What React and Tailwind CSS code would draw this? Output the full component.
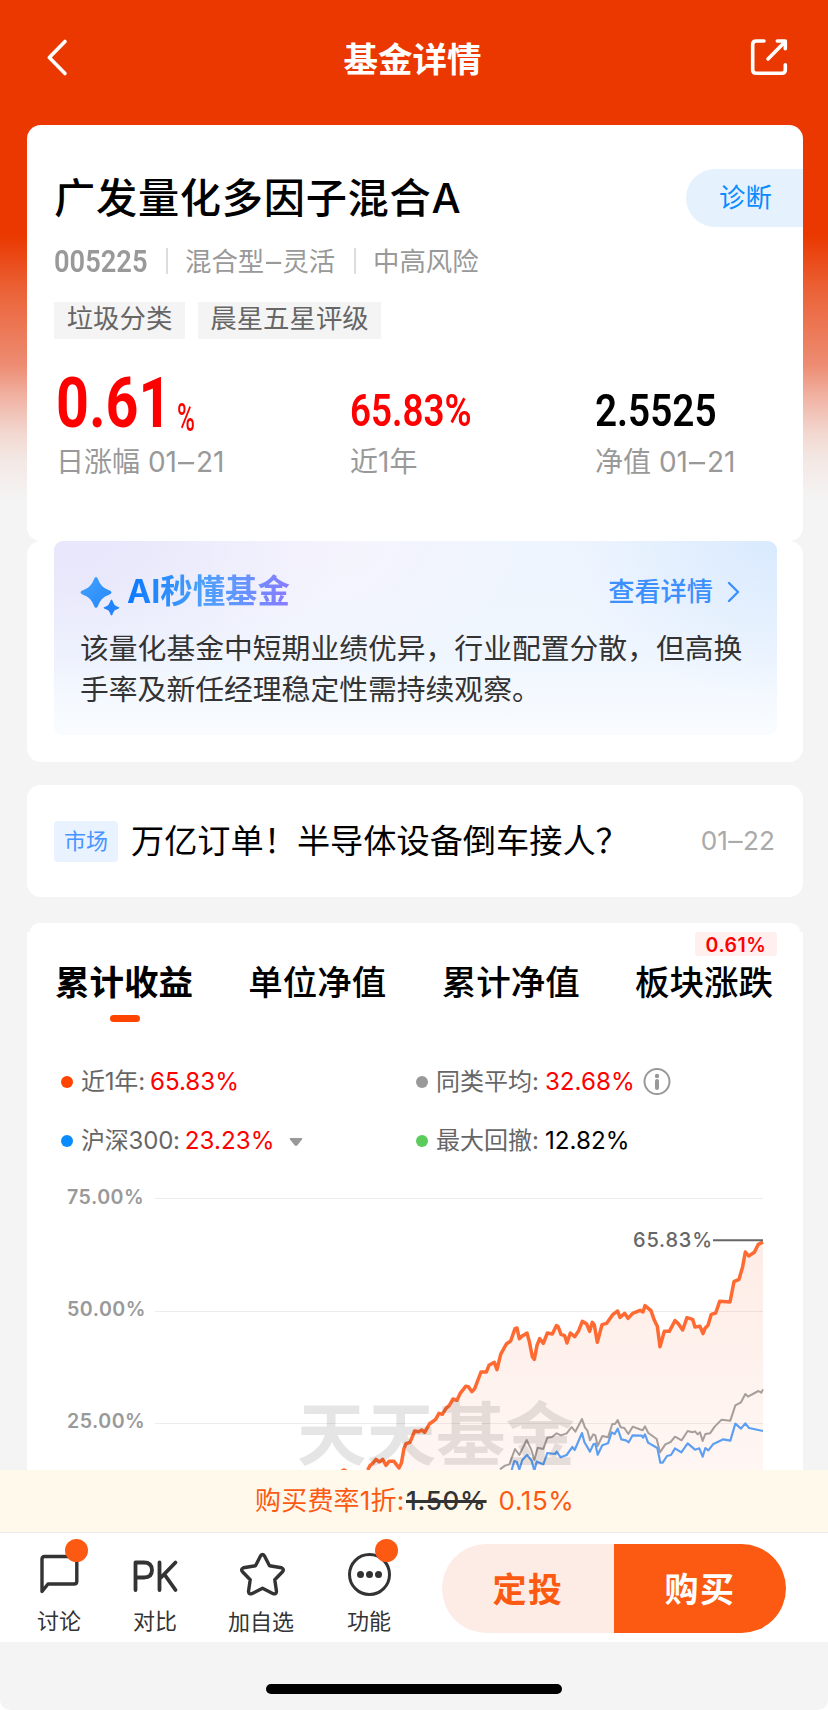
import React from "react";

const SANS = "font-[Inter,'Noto_Sans_CJK_SC',sans-serif]";
const DIN = "font-[Roboto,'Noto_Sans_CJK_SC',sans-serif]";

const fundLine = [
  [293, 810], [300, 797], [308, 790], [318, 778], [328, 786], [338, 778], [348, 796], [357, 784], [372, 784], [387, 804],
  [394, 790], [402, 745], [408, 731], [420, 727], [434, 693], [446, 695], [455, 690], [464, 697], [478, 672], [497, 658],
  [507, 640], [517, 643], [528, 625], [538, 616], [549, 597], [561, 601], [570, 581], [587, 559], [595, 560], [606, 575],
  [614, 566], [633, 516], [649, 516], [657, 496], [673, 487], [681, 509], [692, 463], [709, 432], [722, 423], [735, 386],
  [741, 384], [748, 416], [758, 407], [771, 399], [778, 425], [787, 470], [793, 478], [801, 436], [809, 416], [820, 430],
  [832, 399], [847, 402], [859, 377], [864, 379], [873, 403], [884, 407], [891, 429], [901, 399], [914, 410], [926, 392],
  [937, 364], [950, 372], [959, 394], [967, 367], [973, 375], [982, 427], [996, 374], [1010, 370], [1028, 344], [1043, 333],
  [1050, 352], [1064, 340], [1074, 355], [1088, 340], [1110, 331], [1119, 336], [1125, 317], [1143, 332], [1153, 361],
  [1162, 379], [1170, 440], [1183, 394], [1198, 394], [1215, 362], [1225, 371], [1238, 390], [1251, 353], [1268, 358],
  [1275, 381], [1290, 379], [1299, 401], [1305, 385], [1314, 376], [1324, 343], [1337, 339], [1349, 304], [1380, 306],
  [1392, 245], [1407, 238], [1418, 200], [1426, 156], [1436, 168], [1453, 157], [1465, 133], [1479, 126],
];

const peerLine = [
  [690, 808], [705, 797], [718, 793], [735, 747], [748, 765], [770, 720], [785, 752], [793, 780], [803, 743], [820, 747],
  [832, 713], [846, 711], [860, 700], [873, 706], [890, 700], [905, 681], [916, 695], [936, 657], [945, 683], [952, 691],
  [960, 721], [970, 703], [976, 706], [983, 738], [997, 708], [1014, 712], [1027, 672], [1035, 672], [1043, 660],
  [1052, 682], [1063, 684], [1075, 702], [1088, 680], [1107, 687], [1118, 691], [1125, 679], [1135, 699], [1160, 717],
  [1170, 757], [1186, 733], [1202, 726], [1215, 710], [1235, 721], [1253, 693], [1267, 697], [1275, 694], [1283, 703],
  [1290, 697], [1298, 723], [1306, 702], [1320, 700], [1334, 680], [1355, 659], [1381, 662], [1396, 616], [1413, 607],
  [1426, 582], [1434, 590], [1465, 573], [1474, 578], [1479, 568],
];

const indexLine = [
  [725, 810], [733, 783], [740, 785], [748, 808], [757, 780], [771, 765], [785, 782], [793, 812], [800, 785], [820, 793],
  [832, 759], [855, 762], [860, 755], [872, 772], [890, 765], [907, 741], [914, 750], [936, 699], [943, 726], [960, 755],
  [970, 733], [976, 731], [983, 764], [997, 736], [1014, 730], [1025, 697], [1034, 702], [1043, 686], [1054, 718],
  [1068, 721], [1076, 727], [1088, 706], [1115, 707], [1119, 713], [1125, 703], [1134, 728], [1162, 744], [1171, 788],
  [1178, 788], [1191, 768], [1203, 765], [1215, 745], [1234, 757], [1253, 730], [1275, 749], [1288, 745], [1298, 770],
  [1306, 744], [1315, 751], [1329, 733], [1360, 718], [1381, 722], [1396, 671], [1413, 686], [1426, 670], [1437, 684],
  [1479, 693],
];

const toPoints = (pts) => pts.map((p) => p.join(",")).join(" ");

function Header() {
  return (
    <header className="flex h-[125px] items-start justify-between pl-[45px] pr-[39px] pt-[38px]">
      <svg className="h-[40px] w-[24px]" viewBox="0 0 24 40" fill="none" stroke="#fff" strokeWidth="3.6" strokeLinecap="round" strokeLinejoin="round">
        <path d="M20 3.5L4.3 19.500L20 35.5" />
      </svg>
      <h1 className="ml-[7px] mt-[1px] text-[34.5px] font-bold leading-[42px] text-white">基金详情</h1>
      <svg className="h-[40px] w-[40px]" viewBox="0 0 40 40" fill="none" stroke="#fff" strokeWidth="3.6" strokeLinecap="round" strokeLinejoin="round">
        <path d="M15 3H7.200Q3.700 3 3.700 6.500V31.800Q3.700 35.300 7.200 35.300H32.800Q36.300 35.300 36.300 31.800V26.700" />
        <path d="M28.300 3H36.300V10.700M35.300 4.500L19 21" />
      </svg>
    </header>
  );
}

function Dash() {
  return <span className="mx-[2.500px] inline-block scale-x-[1.150]">–</span>;
}

function Metric({ value, label, className }) {
  return (
    <div className="flex flex-col">
      <div className={`flex h-[62px] items-center whitespace-nowrap pt-[20px] ${DIN} text-[44px] font-semibold leading-none ${className}`}>{value}</div>
      <MetricLabel>{label}</MetricLabel>
    </div>
  );
}

function MetricLabel({ children }) {
  return <div className="mt-[16px] whitespace-nowrap text-[28px] leading-[28px] text-[#999]">{children}</div>;
}

function FundCard() {
  return (
    <section className="h-[416px] rounded-[14px] bg-white pt-[44px]">
      <div className="flex h-[58px] items-center justify-between pl-[27px]">
        <h2 className="whitespace-nowrap text-[41.2px] font-medium leading-[60px] tracking-[.75px] text-black">广发量化多因子混合A</h2>
        <button className="flex h-[58px] w-[117px] items-center rounded-l-full bg-[#e5f2fe] pb-[2px] pl-[33px] text-[26.400px] leading-none text-[#0a8cff]">诊断</button>
      </div>
      <div className="mt-[20px] flex h-[28px] items-center whitespace-nowrap pl-[27px] text-[26.400px] leading-[28px] text-[#999]">
        <span className={`w-[112px] pt-[2px] ${DIN}`}>
          <span className="inline-block origin-left scale-x-[.88] text-[31px] font-semibold leading-[28px]">005225</span>
        </span>
        <span className="h-[26px] w-[2px] bg-[#ddd]" />
        <span className="ml-[17px] w-[169px]">混合型<Dash />灵活</span>
        <span className="h-[26px] w-[2px] bg-[#ddd]" />
        <span className="ml-[17px]">中高风险</span>
      </div>
      <div className="mt-[27px] flex h-[37px] gap-[13px] whitespace-nowrap pl-[27px] text-[26.4px] leading-[33px] text-[#666]">
        <span className="w-[131px] bg-[#f4f4f4] text-center">垃圾分类</span>
        <span className="w-[183px] bg-[#f4f4f4] text-center">晨星五星评级</span>
      </div>
      <div className="mt-[31px] grid grid-cols-[294px_245px_180px] pl-[29px]">
        <div>
          <div className={`flex h-[62px] items-center leading-none text-[#fe0000] ${DIN}`}>
            <span className="w-[121px] pt-[3px]">
              <span className="inline-block origin-left scale-x-[.82] text-[70px] font-bold leading-[62px]">0.61</span>
            </span>
            <span className="w-[24px] pt-[36px]">
              <span className="inline-block origin-left scale-x-[.64] text-[38px] font-medium leading-[28px]">%</span>
            </span>
          </div>
          <MetricLabel>日涨幅 01<Dash />21</MetricLabel>
        </div>
        <Metric
          className="text-[#fe0000]"
          value={<span className="origin-left scale-x-[.835]">65.83%</span>}
          label="近1年"
        />
        <Metric
          className="text-black"
          value={<span className="origin-left scale-x-[.88]">2.5525</span>}
          label={<>净值 01<Dash />21</>}
        />
      </div>
    </section>
  );
}

function AiCard() {
  return (
    <section className="h-[221px] rounded-[14px] bg-white px-[27px]">
      <div className="h-[194px] w-[723px] rounded-[9px] bg-[radial-gradient(ellipse_30%_80%_at_100%_0%,#d9eafe_0%,transparent_100%),radial-gradient(ellipse_40%_80%_at_0%_0%,#e9e7fb_20%,transparent_100%),radial-gradient(ellipse_30%_70%_at_36%_0%,#f6f4fd_0%,transparent_100%),linear-gradient(180deg,#eff5fe_0%,#f0f6fe_60%,#f9fcff_100%)] px-[26px] pt-[29px]">
        <div className="flex h-[44px] items-center">
          <svg className="h-[42px] w-[42px] overflow-visible" viewBox="0 0 42 42">
            <defs>
              <linearGradient id="spark" x1="0" y1="0" x2="1" y2="1">
                <stop offset="0" stopColor="#45a5fd" />
                <stop offset="1" stopColor="#2484fc" />
              </linearGradient>
            </defs>
            <path fill="url(#spark)" d="M16 6Q17.5 6 18.4 9Q21 16.500 28.500 19.100Q31.500 20 31.500 21.500Q31.500 23 28.500 23.900Q21 26.500 18.400 34Q17.500 37 16 37Q14.500 37 13.600 34Q11 26.500 3.500 23.900Q.5 23 .5 21.500Q.5 20 3.500 19.100Q11 16.500 13.600 9Q14.500 6 16 6Z" />
            <path fill="#2484fc" d="M31.500 28.500Q32.400 28.500 33 31Q34 34.500 37 35.400Q39.500 36 39.500 36.800Q39.500 37.600 37 38.200Q34 39 33 42Q32.400 44.500 31.500 44.500Q30.600 44.500 30 42Q29 39 26 38.200Q23.500 37.600 23.500 36.800Q23.500 36 26 35.400Q29 34.500 30 31Q30.600 28.500 31.500 28.500Z" />
          </svg>
          <h3 className="ml-[5px] bg-[linear-gradient(90deg,#0a78ff_0%,#4aa0fb_45%,#5f98ff_65%,#8a7bff_100%)] bg-clip-text text-[32.400px] font-bold leading-[44px] text-transparent">AI秒懂基金</h3>
          <span className="ml-auto text-[26.200px] font-medium leading-[44px] text-[#3d90fb]">查看详情</span>
          <svg className="ml-[13px] mr-[10px] h-[22px] w-[15px]" viewBox="0 0 15 22" fill="none" stroke="#3d90fb" strokeWidth="2.4" strokeLinecap="round" strokeLinejoin="round">
            <path d="M3 2L12 11L3 20" />
          </svg>
        </div>
        <p className="mt-[15px] whitespace-nowrap text-[28.800px] leading-[40.500px] text-[#333]">
          该量化基金中短期业绩优异，行业配置分散，但高换
          <br />
          手率及新任经理稳定性需持续观察。
        </p>
      </div>
    </section>
  );
}

function NewsCard() {
  return (
    <section className="mt-[23px] flex h-[112px] items-center rounded-[14px] bg-white pl-[27px] pr-[28px]">
      <span className="h-[41px] w-[64px] rounded-[4px] bg-[#e9f2ff] text-center text-[22px] leading-[40px] text-[#4895ff]">市场</span>
      <span className="ml-[13px] whitespace-nowrap text-[33.200px] leading-[44px] text-black">万亿订单！半导体设备倒车接人？</span>
      <span className="ml-auto text-[26.200px] leading-[40px] text-[#aaa]">01<span className="mx-[1px] inline-block scale-x-110">–</span>22</span>
    </section>
  );
}

function Tab({ children, active, badge }) {
  return (
    <div className="relative flex flex-col items-center">
      {badge && (
        <span className="absolute -top-[30px] right-[-4px] h-[24px] w-[82px] rounded-[4px] bg-[#ffefef] text-center text-[19.500px] font-semibold leading-[26px] tracking-[.5px] text-[#fe0000]">{badge}</span>
      )}
      <span className={`text-[34.500px] leading-[41px] text-black ${active ? "font-bold" : "font-medium"}`}>{children}</span>
      {active && <span className="mt-[12px] h-[7px] w-[30px] translate-x-px rounded-full bg-[#ff4400]" />}
    </div>
  );
}

function LegendItem({ dot, label, value, labelClass = "", valueClass, children }) {
  return (
    <div className="flex h-[30px] items-center whitespace-nowrap">
      <span className={`h-[12px] w-[12px] rounded-full ${dot}`} />
      <span className={`ml-[8px] text-[24px] leading-[30px] text-[#666] ${labelClass}`}>{label}</span>
      <span className={`text-[24.200px] leading-[30px] ${valueClass}`}>{value}</span>
      {children}
    </div>
  );
}

function AxisLabel({ children }) {
  return <div className="h-[112px] pl-[40px] text-[19.600px] font-semibold leading-[20px] tracking-[.5px] text-[#999]">{children}</div>;
}

function Chart() {
  return (
    <div className="relative mt-[31px] h-[283px]">
      <div>
        <AxisLabel>75.00%</AxisLabel>
        <AxisLabel>50.00%</AxisLabel>
        <div className="pl-[40px] text-[19.600px] font-semibold leading-[20px] tracking-[.5px] text-[#999]">25.00%</div>
      </div>
      <svg className="absolute left-[27px] top-[-7px] h-[290px] w-[723px]" viewBox="-648 -60 2169 870">
        <defs>
          <linearGradient id="area" x1="0" y1="0" x2="0" y2="1">
            <stop offset="0" stopColor="#f7531a" stopOpacity=".11" />
            <stop offset="1" stopColor="#f7531a" stopOpacity=".05" />
          </linearGradient>
        </defs>
        <g stroke="#000" strokeOpacity=".07" strokeWidth="3">
          <path d="M-345 -4.500H1479M-345 334.500H1479M-345 670.500H1479" />
        </g>
        <polygon fill="url(#area)" points={`${toPoints(fundLine)} 1479,810 293,810`} />
        <g fill="none" strokeLinejoin="round">
          <polyline points={toPoints(peerLine)} stroke="#a69e9b" strokeWidth="6" />
          <polyline points={toPoints(indexLine)} stroke="#5c9ff2" strokeWidth="6.500" />
          <polyline points={toPoints(fundLine)} stroke="#ff6a33" strokeWidth="10.500" />
          <path d="M214 811L222 807L230 811" stroke="#ff6a33" strokeWidth="5" />
          <path d="M1329 120.500H1479" stroke="#666" strokeWidth="6" />
        </g>
      </svg>
      <span className="absolute left-[270px] top-[214px] whitespace-nowrap text-[69.500px] font-bold leading-[68px] text-black/10">天天基金</span>
      <span className="absolute left-[606px] top-[43px] text-[20px] font-medium leading-[20px] tracking-[.8px] text-[#666]">65.83%</span>
    </div>
  );
}

function ChartCard() {
  return (
    <section className="mt-[26px] h-[547px] overflow-hidden">
      <div className="mx-[3px] h-[9px] rounded-t-[14px] bg-white" />
      <div className="h-[538px] bg-white pt-[30px]">
        <div className="flex h-[62px] items-start justify-between pl-[28px] pr-[30px]">
          <Tab active>累计收益</Tab>
          <Tab>单位净值</Tab>
          <Tab>累计净值</Tab>
          <Tab badge="0.61%">板块涨跌</Tab>
        </div>
        <div className="mt-[43px] grid grid-cols-[355px_1fr] gap-y-[29px] pl-[34px]">
          <LegendItem dot="bg-[#ff4400]" label="近1年:" value="65.83%" labelClass="tracking-[-.2px]" valueClass="ml-[5px] text-[#fe0000]" />
          <LegendItem dot="bg-[#999]" label="同类平均:" value="32.68%" valueClass="ml-[6px] text-[#fe0000]">
            <svg className="ml-[8px] h-[28px] w-[28px]" viewBox="0 0 28 28" fill="none" stroke="#999">
              <circle cx="14" cy="13.500" r="12.500" strokeWidth="2" />
              <circle cx="14" cy="8" r="2.200" fill="#999" stroke="none" />
              <path d="M14 13V20" strokeWidth="4" strokeLinecap="round" />
            </svg>
          </LegendItem>
          <LegendItem dot="bg-[#0a8cff]" label="沪深300:" value="23.23%" labelClass="tracking-[-.2px]" valueClass="ml-[5px] text-[#fe0000]">
            <svg className="ml-[15px] mt-[2px] h-[8px] w-[14px]" viewBox="0 0 14 8">
              <path d="M1.500 0H12.500Q14 .5 13 1.600L8.400 7.200Q7 8.600 5.600 7.200L1 1.600Q0 .5 1.500 0Z" fill="#999" />
            </svg>
          </LegendItem>
          <LegendItem dot="bg-[#5bcb5b]" label="最大回撤:" value="12.82%" valueClass="ml-[6px] text-black" />
        </div>
        <Chart />
      </div>
    </section>
  );
}

function NavItem({ icon, label, dot, className, labelClass = "" }) {
  return (
    <div className={`relative flex flex-col items-center ${className}`}>
      <div className="h-[44px]">{icon}</div>
      {dot && <span className="absolute left-[50%] top-[-13px] ml-[6px] h-[23px] w-[23px] rounded-full bg-[#fc5a12]" />}
      <span className={`mt-[13px] whitespace-nowrap text-[22px] leading-[24px] text-[#333] ${labelClass}`}>{label}</span>
    </div>
  );
}

function BottomBar() {
  return (
    <footer>
      <div className="flex h-[63px] items-center whitespace-nowrap border-b border-[#eaeaea] bg-[#fff9ec] pl-[255px] text-[26px] leading-[40px] text-[#fc5a12]">
        <span className="w-[151px] tracking-[.2px]">购买费率1折:</span>
        <span className="font-medium tracking-[.7px] text-[#333] line-through decoration-[3px]">1.50%</span>
        <span className="ml-[12px] tracking-[.6px]">0.15%</span>
      </div>
      <div className="flex h-[109px] bg-white pt-[11px]">
        <NavItem
          className="ml-[28px] mt-[8px] w-[62px]"
          dot
          label="讨论"
          icon={
            <svg className="h-[44px] w-[44px]" viewBox="0 0 44 44" fill="none" stroke="#333" strokeWidth="3.400" strokeLinecap="round" strokeLinejoin="round">
              <path d="M5 39.500V7Q5 4.500 7.500 4.500H37Q39.800 4.500 39.800 7V29.500Q39.800 32 37 32H11L5 39.500Z" />
            </svg>
          }
        />
        <NavItem
          className="ml-[35px] mt-[8px] w-[60px]"
          label="对比"
          icon={
            <svg className="h-[44px] w-[50px]" viewBox="0 0 50 44" fill="none" stroke="#333" strokeWidth="3.800" strokeLinecap="round" strokeLinejoin="round">
              <path d="M5.500 38V10.500H14Q22 10.500 22 18Q22 25.500 14 25.500H5.500" />
              <path d="M29.500 10.500V38M45.500 10.500L29.500 27M34.500 22.500L45.500 38" />
            </svg>
          }
        />
        <NavItem
          className="ml-[38px] mt-[8px] w-[76px]"
          labelClass="translate-y-px"
          label="加自选"
          icon={
            <svg className="h-[46px] w-[48px] translate-x-[1.500px]" viewBox="0 0 48 46" fill="none" stroke="#333" strokeWidth="3.400" strokeLinejoin="round">
              <path d="M22 4Q24 1 26 4L31 13.800L43 15.800Q46 17.200 44 19.700L36.300 27.700L38 39.500Q37.700 42.500 34.700 41.700L24 36.300L13.300 41.700Q10.300 42.500 10 39.500L11.700 27.700L4 19.700Q2 17.200 5 15.800L17 13.800Z" />
            </svg>
          }
        />
        <NavItem
          className="ml-[40px] mt-[8px] w-[60px]"
          dot
          label="功能"
          icon={
            <svg className="h-[44px] w-[44px]" viewBox="0 0 44 44">
              <circle cx="22.500" cy="22.500" r="20" fill="none" stroke="#333" strokeWidth="3" />
              <circle cx="13.500" cy="22.500" r="3.500" fill="#333" />
              <circle cx="22.500" cy="22.500" r="3.500" fill="#333" />
              <circle cx="31.500" cy="22.500" r="3.500" fill="#333" />
            </svg>
          }
        />
        <div className="ml-[43px] flex h-[89px] w-[344px] overflow-hidden rounded-full text-center text-[34px] font-bold leading-[92px] tracking-[1.500px]">
          <button className="w-[172px] bg-[#fcece5] text-[#fc5a12]">定投</button>
          <button className="w-[172px] bg-[#fc5a12] text-white">购买</button>
        </div>
      </div>
      <div className="flex h-[68px] items-start justify-center rounded-b-[10px] bg-[#f4f4f4] pt-[42px]">
        <span className="h-[10px] w-[296px] rounded-full bg-black" />
      </div>
    </footer>
  );
}

export default function App() {
  return (
    <div className={`h-[1710px] w-[828px] overflow-hidden bg-white ${SANS}`}>
      <div className="h-[1470px] bg-[linear-gradient(180deg,#ea3800_0px,#ea3800_235px,#eb6237_290px,#ed8c72_365px,#f1b6a8_400px,#f2d9d1_435px,#f3e8e4_460px,#f4f4f4_500px)]">
        <Header />
        <main className="ml-[27px] w-[776px]">
          <FundCard />
          <AiCard />
          <NewsCard />
          <ChartCard />
        </main>
      </div>
      <BottomBar />
    </div>
  );
}
